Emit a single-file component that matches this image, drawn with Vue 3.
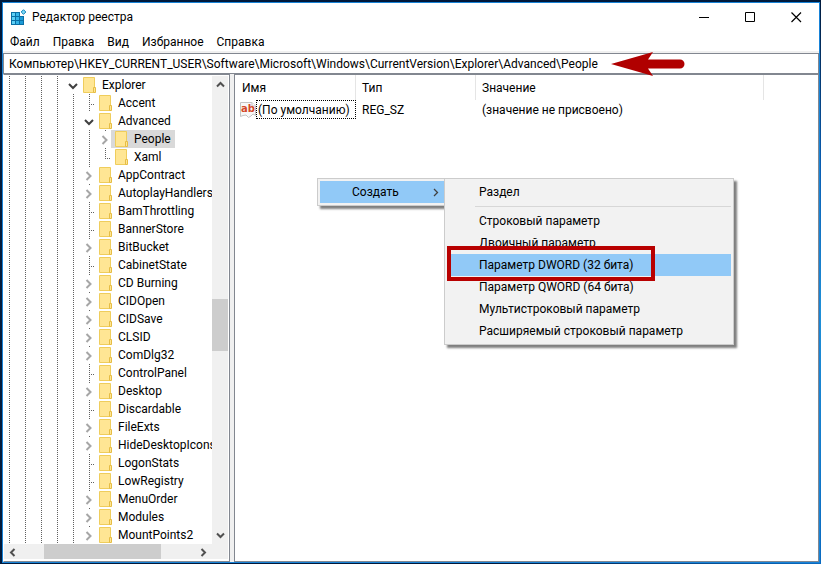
<template>
<div class="desktop">
    <div class="window">
        <header class="titlebar">
            <svg class="app-icon" width="16" height="16" viewBox="0 0 16 16">
                <path d="M0 3H9V7H13V16H0Z" fill="#0a6fa5"/>
                <rect x="1" y="4" width="3" height="3" fill="#5fd0f5"/>
                <rect x="5" y="4" width="3" height="3" fill="#35b4e8"/>
                <rect x="1" y="8" width="3" height="3" fill="#5fd0f5"/>
                <rect x="5" y="8" width="3" height="3" fill="#35b4e8"/>
                <rect x="9" y="8" width="3" height="3" fill="#1c9ad6"/>
                <rect x="1" y="12" width="3" height="3" fill="#5fd0f5"/>
                <rect x="5" y="12" width="3" height="3" fill="#35b4e8"/>
                <rect x="9" y="12" width="3" height="3" fill="#1c9ad6"/>
                <path d="M12.500 .7L14.800 3L12.500 5.300L10.200 3Z" fill="#7fdcf8" stroke="#0a7fb8"/>
            </svg>
            <h1 class="title">Редактор реестра</h1>
            <button class="win-button" aria-label="Свернуть">
                <svg width="11" height="11"><path d="M0 5.500H10" stroke="#000"/></svg>
            </button>
            <button class="win-button" aria-label="Развернуть">
                <svg width="11" height="11"><path d="M.5 .5H9.500V9.500H.5Z" fill="none" stroke="#000"/></svg>
            </button>
            <button class="win-button" aria-label="Закрыть">
                <svg width="11" height="11"><path d="M.5 .5L10 10M10 .5L.5 10" fill="none" stroke="#000" stroke-width="1.200"/></svg>
            </button>
        </header>

        <nav class="menubar">
            <button v-for="item in menu" :key="item" class="menubar-item">{{ item }}</button>
        </nav>

        <div class="address">
            <input v-model="path" class="address-input" type="text" aria-label="Путь" spellcheck="false">
            <svg class="arrow" width="76" height="26" viewBox="0 0 76 26">
                <path d="M1 13L43 1L38 8.500H70A4.500 4.500 0 0 1 70 17.500H38L43 25Z" fill="#b00000"/>
            </svg>
        </div>

        <main class="panes">
            <section class="tree-pane">
                <div class="tree-body">
                    <ul class="tree" role="tree">
                        <li v-for="node in nodes" :key="node.name" class="node" role="treeitem" :aria-selected="node.name === selected" @click="selected = node.name">
                            <span v-for="n in node.level" :key="n" class="guide"></span>
                            <span class="expander" :class="['expander-' + node.state, { 'expander-last': node.last }]">
                                <svg v-if="node.state === 'closed'" class="chevron" width="11" height="18"><path d="M2.500 6L6.500 10L2.500 14" fill="none" stroke="#a6a6a6" stroke-width="2"/></svg>
                                <svg v-if="node.state === 'open'" class="chevron" width="11" height="18"><path d="M1 8L5 12L9 8" fill="none" stroke="#404040" stroke-width="2"/></svg>
                            </span>
                            <span class="label" :class="{ 'label-selected': node.name === selected }">
                                <svg class="folder" width="14" height="16" viewBox="0 0 14 16">
                                    <path d="M.5 .5H11.500V15.500H.5Z" fill="#ffe694" stroke="#efcd5c"/>
                                    <path d="M10.500 10.500H12.500V15.500H10.500Z" fill="#ffe694" stroke="#e6bd45"/>
                                </svg>
                                {{ node.name }}
                            </span>
                        </li>
                    </ul>
                    <div class="scroll-v">
                        <button class="scroll-button" aria-label="Вверх"><svg width="9" height="9"><path d="M1 6.500L4.500 3L8 6.500" fill="none" stroke="#505050" stroke-width="2"/></svg></button>
                        <div class="track-v"><div class="thumb-v"></div></div>
                        <button class="scroll-button" aria-label="Вниз"><svg width="9" height="9"><path d="M1 2.500L4.500 6L8 2.500" fill="none" stroke="#505050" stroke-width="2"/></svg></button>
                    </div>
                </div>
                <div class="scroll-h">
                    <button class="scroll-button" aria-label="Влево"><svg width="9" height="9"><path d="M6.500 1L3 4.500L6.500 8" fill="none" stroke="#505050" stroke-width="2"/></svg></button>
                    <div class="track-h"><div class="thumb-h"></div></div>
                    <button class="scroll-button" aria-label="Вправо"><svg width="9" height="9"><path d="M2.500 1L6 4.500L2.500 8" fill="none" stroke="#505050" stroke-width="2"/></svg></button>
                </div>
            </section>

            <section class="list-pane">
                <table class="list">
                    <colgroup>
                        <col class="col-name">
                        <col class="col-type">
                        <col class="col-value">
                        <col>
                    </colgroup>
                    <thead>
                        <tr>
                            <th class="head-name">Имя</th>
                            <th>Тип</th>
                            <th>Значение</th>
                            <td></td>
                        </tr>
                    </thead>
                    <tbody>
                        <tr>
                            <td class="cell-name">
                                <div class="value-name">
                                    <svg width="16" height="16" viewBox="0 0 16 16">
                                        <path d="M.5 .5H12L15.500 4V13.500L13 12L11 14L8.500 15.500L6 13L3 13.500L.5 14.500Z" fill="#f7f7f7" stroke="#c4c4c4"/>
                                        <path d="M12 .5V4H15.500" fill="#fff" stroke="#c4c4c4"/>
                                        <text x="1" y="10" class="icon-text">ab</text>
                                    </svg>
                                    <span class="focused">(По умолчанию)</span>
                                </div>
                            </td>
                            <td>REG_SZ</td>
                            <td>(значение не присвоено)</td>
                            <td></td>
                        </tr>
                    </tbody>
                </table>
            </section>
        </main>
    </div>

    <div class="popup popup-parent" role="menu">
        <button class="popup-item popup-item-active" role="menuitem">
            Создать
            <svg class="popup-chevron" width="6" height="9"><path d="M1 1L4.500 4.500L1 8" fill="none" stroke="#404040" stroke-width="1.300"/></svg>
        </button>
    </div>

    <div class="popup popup-child" role="menu">
        <template v-for="item in createItems" :key="item">
            <button class="popup-item" :class="{ 'popup-item-active': item === activeItem }" role="menuitem">{{ item }}</button>
            <hr v-if="item === 'Раздел'" class="popup-line">
        </template>
        <div class="highlight"></div>
    </div>
</div>
</template>

<script setup>
import { ref } from 'vue'

const menu = ['Файл', 'Правка', 'Вид', 'Избранное', 'Справка']
const path = ref('Компьютер\\HKEY_CURRENT_USER\\Software\\Microsoft\\Windows\\CurrentVersion\\Explorer\\Advanced\\People')
const selected = ref('People')

const nodes = [
    { name: 'Explorer', level: 4, state: 'open' },
    { name: 'Accent', level: 5, state: 'leaf' },
    { name: 'Advanced', level: 5, state: 'open' },
    { name: 'People', level: 6, state: 'closed' },
    { name: 'Xaml', level: 6, state: 'leaf', last: true },
    { name: 'AppContract', level: 5, state: 'closed' },
    { name: 'AutoplayHandlers', level: 5, state: 'closed' },
    { name: 'BamThrottling', level: 5, state: 'leaf' },
    { name: 'BannerStore', level: 5, state: 'leaf' },
    { name: 'BitBucket', level: 5, state: 'closed' },
    { name: 'CabinetState', level: 5, state: 'leaf' },
    { name: 'CD Burning', level: 5, state: 'closed' },
    { name: 'CIDOpen', level: 5, state: 'closed' },
    { name: 'CIDSave', level: 5, state: 'closed' },
    { name: 'CLSID', level: 5, state: 'closed' },
    { name: 'ComDlg32', level: 5, state: 'closed' },
    { name: 'ControlPanel', level: 5, state: 'leaf' },
    { name: 'Desktop', level: 5, state: 'closed' },
    { name: 'Discardable', level: 5, state: 'leaf' },
    { name: 'FileExts', level: 5, state: 'closed' },
    { name: 'HideDesktopIcons', level: 5, state: 'closed' },
    { name: 'LogonStats', level: 5, state: 'leaf' },
    { name: 'LowRegistry', level: 5, state: 'leaf' },
    { name: 'MenuOrder', level: 5, state: 'closed' },
    { name: 'Modules', level: 5, state: 'closed' },
    { name: 'MountPoints2', level: 5, state: 'closed' },
]

const createItems = [
    'Раздел',
    'Строковый параметр',
    'Двоичный параметр',
    'Параметр DWORD (32 бита)',
    'Параметр QWORD (64 бита)',
    'Мультистроковый параметр',
    'Расширяемый строковый параметр',
]
const activeItem = 'Параметр DWORD (32 бита)'
</script>

<style>
body{
    margin: 0;
    overflow: hidden;
}
</style>

<style scoped>
.desktop{
    position: relative;
    box-sizing: border-box;
    height: 100vh;
    padding: 2px 1px 1px 2px;
    display: flex;
    background: linear-gradient(90deg, #001a3c 0%, #00173a 60%, rgba(0,23,58,0) 100%), linear-gradient(180deg, #001a3c 0%, #0a5fb4 30%, #2090d8 55%, #0a6ac0 100%);
    font-family: Roboto, "Noto Sans", sans-serif;
    font-size: 12px;
    line-height: 18px;
    color: #000;
}

button, input{
    font: inherit;
    color: inherit;
    border: 0;
    padding: 0;
    margin: 0;
    background: none;
}

.window{
    flex: 1;
    min-width: 0;
    display: flex;
    flex-direction: column;
    border: 1px solid #1883d7;
    background: #fff;
}

.titlebar{
    display: flex;
    align-items: center;
    height: 28px;
    padding-bottom: 2px;
    padding-left: 8px;
}

.title{
    flex: 1;
    margin: 0 0 0 5px;
    font-size: 12px;
    font-weight: normal;
}

.win-button{
    display: flex;
    align-items: center;
    justify-content: center;
    width: 46px;
    height: 28px;
}

.menubar{
    display: flex;
    gap: 13px;
    height: 18px;
    padding-left: 7px;
    border-bottom: 2px solid #f0f0f0;
}

.address{
    position: relative;
    display: flex;
    height: 19px;
    border: 1px solid #828790;
}

.address-input{
    flex: 1;
    padding-left: 5px;
    outline: none;
}

.arrow{
    position: absolute;
    left: 606px;
    top: -3px;
}

.panes{
    flex: 1;
    min-height: 0;
    display: flex;
    gap: 4px;
    background: #f0f0f0;
}

.tree-pane{
    box-sizing: border-box;
    width: 227px;
    display: flex;
    flex-direction: column;
    padding: 1px 1px 2px 0;
    border: 1px solid #828790;
    border-left-color: #fff;
    background: #fff;
}

.tree-body{
    flex: 1;
    min-height: 0;
    display: flex;
}

.tree{
    flex: 1;
    min-width: 0;
    margin: 0;
    padding: 0;
    overflow: hidden;
    list-style: none;
}

.node{
    display: flex;
    height: 18px;
    white-space: nowrap;
}

.guide{
    flex: none;
    width: 16px;
    background: repeating-linear-gradient(180deg, #606060 0 1px, transparent 1px 2px) 5px 0 / 1px 18px no-repeat;
}

.expander{
    flex: none;
    width: 11px;
}

.expander-leaf{
    background:
        repeating-linear-gradient(180deg, #606060 0 1px, transparent 1px 2px) 5px 0 / 1px 18px no-repeat,
        repeating-linear-gradient(90deg, #606060 0 1px, transparent 1px 2px) 5px 10px / 6px 1px no-repeat;
}

.expander-last{
    background-size: 1px 10px, 6px 1px;
}

.expander-closed{
    background: linear-gradient(#606060, #606060) 5px 0 / 1px 1px no-repeat;
}

.chevron{
    display: block;
}

.label{
    display: flex;
    align-items: center;
    gap: 5px;
    padding: 0 4px;
}

.label-selected{
    background: #d9d9d9;
}

.folder{
    flex: none;
}

.scroll-v{
    width: 16px;
    display: flex;
    flex-direction: column;
    background: #f0f0f0;
}

.scroll-h{
    display: flex;
    height: 15px;
    padding-right: 17px;
    background: #f0f0f0;
}

.scroll-button{
    display: flex;
    flex: none;
    align-items: center;
    justify-content: center;
    width: 16px;
    height: 17px;
}

.track-v, .track-h{
    flex: 1;
}

.track-v{
    padding-top: 206px;
}

.thumb-v{
    height: 52px;
    background: #cdcdcd;
}

.track-h{
    padding-left: 24px;
}

.thumb-h{
    width: 117px;
    height: 15px;
    background: #cdcdcd;
}

.list-pane{
    flex: 1;
    min-width: 0;
    border: 1px solid #828790;
    background: #fff;
}

.list{
    width: 100%;
    table-layout: fixed;
    border-collapse: separate;
    border-spacing: 0;
}

.col-name{
    width: 121px;
}

.col-type{
    width: 120px;
}

.col-value{
    width: 288px;
}

.list th, .list td{
    padding: 0 6px;
    text-align: left;
    font-weight: normal;
    white-space: nowrap;
}

.list th{
    height: 25px;
    border-right: 1px solid #e5e5e5;
}

.list .head-name{
    padding-left: 7px;
}

.list .cell-name{
    padding: 0 0 0 5px;
}

.value-name{
    display: flex;
    align-items: center;
}

.icon-text{
    font-family: "DejaVu Sans", sans-serif;
    font-size: 10px;
    font-weight: bold;
    fill: #d4472a;
}

.focused{
    flex: 1;
    padding-left: 1px;
    height: 17px;
    line-height: 18px;
    border: 1px dotted #000;
}

.popup{
    position: absolute;
    box-sizing: border-box;
    padding: 2px;
    border: 1px solid #ccc;
    background: #f2f2f2;
    box-shadow: 3px 3px 2px rgba(0,0,0,.5);
}

.popup-parent{
    left: 317px;
    top: 178px;
    width: 130px;
}

.popup-child{
    left: 444px;
    top: 178px;
    width: 290px;
}

.popup-item{
    display: flex;
    align-items: center;
    justify-content: space-between;
    width: 100%;
    height: 22px;
    padding: 0 5px 0 32px;
    text-align: left;
    white-space: nowrap;
}

.popup-item-active{
    background: #91c9f7;
}

.popup-line{
    margin: 3px 0 3px 28px;
    border: 0;
    border-top: 1px solid #d7d7d7;
}

.highlight{
    position: absolute;
    box-sizing: border-box;
    left: 2px;
    top: 67px;
    width: 208px;
    height: 35px;
    border: 4px solid #b80000;
}
</style>
